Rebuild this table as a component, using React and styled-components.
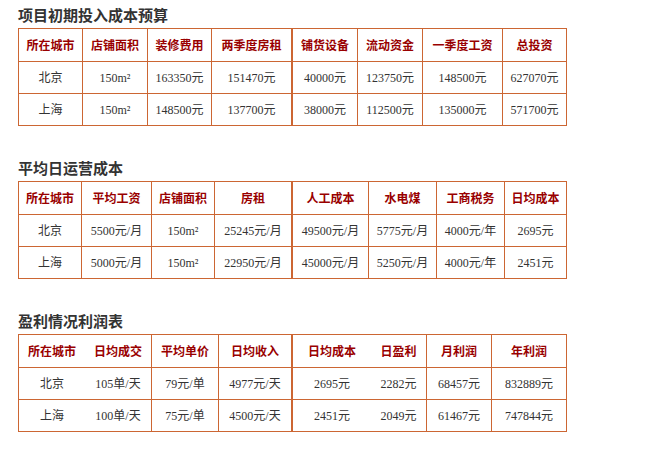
import React from 'react';
import styled, { createGlobalStyle } from 'styled-components';

const GlobalStyle = createGlobalStyle`
  html, body {
    margin: 0;
    padding: 0;
    background: #ffffff;
  }
  body {
    font-family: "Noto Sans CJK SC", "Noto Sans", sans-serif;
  }
`;

const Page = styled.div`
  padding: 4px 0 0 18px;
  width: 643px;
`;

const Section = styled.section`
  margin-bottom: 31px;
`;

const Title = styled.h3`
  margin: 0 0 2px 0;
  font-size: 15px;
  line-height: 22px;
  font-weight: bold;
  color: #333333;
  font-family: "Noto Sans CJK SC", sans-serif;
`;

const Grid = styled.div`
  display: grid;
  grid-template-columns: ${p => p.cols.map(c => `${c}px`).join(' ')};
  grid-auto-rows: 32px;
  grid-template-rows: 33px;
  width: max-content;
  border-top: 1px solid #cc6633;
  border-left: 1px solid #cc6633;
`;

const Cell = styled.div`
  display: flex;
  align-items: center;
  justify-content: center;
  box-sizing: border-box;
  border-bottom: 1px solid #cc6633;
  border-right: ${p => (p.$open ? '0' : p.$thick ? '2px' : '1px')} solid #cc6633;
  font-size: 12px;
  line-height: 16px;
  color: #333333;
  white-space: nowrap;
  font-family: "Liberation Serif", "Noto Sans CJK SC", serif;

  span {
    display: block;
    height: 16px;
    line-height: 16px;
  }
`;

const HeadCell = styled(Cell)`
  color: #990000;
  font-weight: bold;
  font-family: "Noto Sans CJK SC", sans-serif;
`;

const tables = [
  {
    title: '项目初期投入成本预算',
    cols: [64, 65, 64, 81, 65, 65, 80, 64],
    open: [],
    head: ['所在城市', '店铺面积', '装修费用', '两季度房租', '铺货设备', '流动资金', '一季度工资', '总投资'],
    rows: [
      ['北京', '150m²', '163350元', '151470元', '40000元', '123750元', '148500元', '627070元'],
      ['上海', '150m²', '148500元', '137700元', '38000元', '112500元', '135000元', '571700元'],
    ],
  },
  {
    title: '平均日运营成本',
    cols: [63, 70, 63, 78, 76, 68, 68, 62],
    open: [],
    head: ['所在城市', '平均工资', '店铺面积', '房租', '人工成本', '水电煤', '工商税务', '日均成本'],
    rows: [
      ['北京', '5500元/月', '150m²', '25245元/月', '49500元/月', '5775元/月', '4000元/年', '2695元'],
      ['上海', '5000元/月', '150m²', '22950元/月', '45000元/月', '5250元/月', '4000元/年', '2451元'],
    ],
  },
  {
    title: '盈利情况利润表',
    cols: [66, 67, 67, 74, 78, 56, 65, 75],
    open: [0, 4],
    head: ['所在城市', '日均成交', '平均单价', '日均收入', '日均成本', '日盈利', '月利润', '年利润'],
    rows: [
      ['北京', '105单/天', '79元/单', '4977元/天', '2695元', '2282元', '68457元', '832889元'],
      ['上海', '100单/天', '75元/单', '4500元/天', '2451元', '2049元', '61467元', '747844元'],
    ],
  },
];

function CostTable({ table }) {
  const cellProps = (i) => ({
    $thick: i === 3,
    $open: table.open.includes(i),
  });
  return (
    <Section>
      <Title>{table.title}</Title>
      <Grid cols={table.cols}>
        {table.head.map((h, i) => (
          <HeadCell key={'h' + i} {...cellProps(i)}><span>{h}</span></HeadCell>
        ))}
        {table.rows.map((row, r) =>
          row.map((v, i) => (
            <Cell key={r + '-' + i} {...cellProps(i)}><span>{v}</span></Cell>
          ))
        )}
      </Grid>
    </Section>
  );
}

export default function App() {
  return (
    <Page>
      <GlobalStyle />
      {tables.map((t) => <CostTable key={t.title} table={t} />)}
    </Page>
  );
}
